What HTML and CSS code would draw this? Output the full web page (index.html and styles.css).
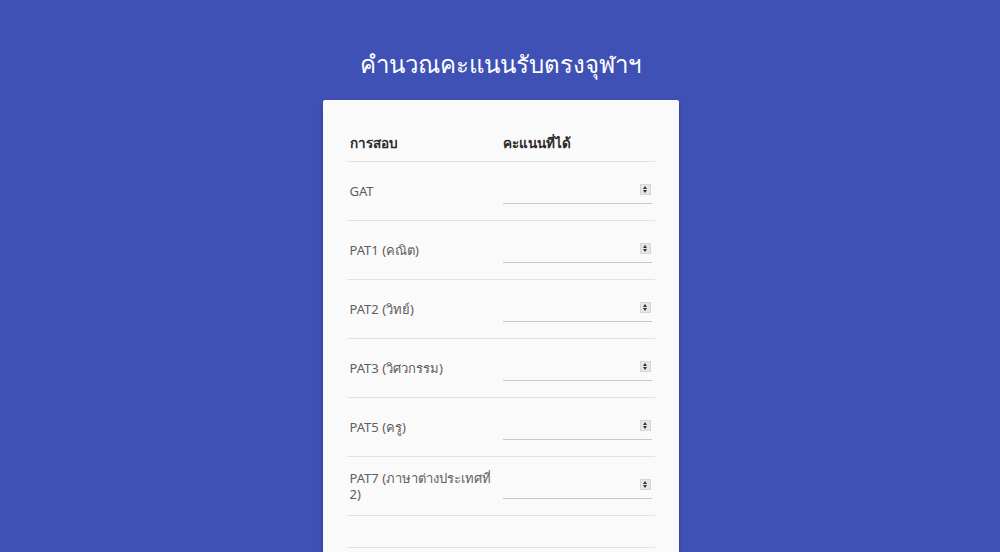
FILE: index.html
```html
<!DOCTYPE html>
<html lang="th">
<head>
<meta charset="utf-8">
<title>คำนวณคะแนนรับตรงจุฬาฯ</title>
<link rel="stylesheet" href="styles.css">
</head>
<body>
<main class="page">
  <h1 class="title">คำนวณคะแนนรับตรงจุฬาฯ</h1>
  <section class="card">
    <div class="row head">
      <div class="cell">การสอบ</div>
      <div class="cell">คะแนนที่ได้</div>
    </div>
    <div class="row">
      <div class="cell name">GAT</div>
      <div class="cell"><div class="field"><span class="spin"></span></div></div>
    </div>
    <div class="row">
      <div class="cell name">PAT1 (คณิต)</div>
      <div class="cell"><div class="field"><span class="spin"></span></div></div>
    </div>
    <div class="row">
      <div class="cell name">PAT2 (วิทย์)</div>
      <div class="cell"><div class="field"><span class="spin"></span></div></div>
    </div>
    <div class="row">
      <div class="cell name">PAT3 (วิศวกรรม)</div>
      <div class="cell"><div class="field"><span class="spin"></span></div></div>
    </div>
    <div class="row">
      <div class="cell name">PAT5 (ครู)</div>
      <div class="cell"><div class="field"><span class="spin"></span></div></div>
    </div>
    <div class="row">
      <div class="cell name">PAT7 (ภาษาต่างประเทศที่ 2)</div>
      <div class="cell"><div class="field"><span class="spin"></span></div></div>
    </div>
    <div class="row empty"></div>
    <div class="row empty"></div>
  </section>
</main>
</body>
</html>
```

FILE: styles.css
```css
html, body {
  margin: 0;
  padding: 0;
  background: #3f51b5;
  font-family: "Noto Sans", "Open Sans", sans-serif;
}
.page {
  display: flex;
  flex-direction: column;
  align-items: center;
  padding-top: 44px;
}
.title {
  margin: 0 0 16px;
  color: #ffffff;
  font-size: 24px;
  font-weight: 400;
  line-height: 40px;
}
.card {
  width: 308px;
  padding: 24px 24px 0;
  margin-left: 1px;
  background: #fafafa;
  border-radius: 2px;
  box-shadow: 0 2px 4px rgba(0, 0, 0, 0.25);
}
.row {
  display: grid;
  grid-template-columns: 154px 154px;
  min-height: 58px;
  border-bottom: 1px solid #e2e2e2;
}
.row.head {
  min-height: 36px;
  padding-top: 1px;
  font-weight: 700;
  color: #333333;
}
.row.empty {
  min-height: 31px;
}
.cell {
  padding: 0 2px 0 3px;
  font-size: 13px;
  line-height: 16px;
  align-self: center;
  color: #5e5e5e;
}
.head .cell {
  color: #2b2b2b;
  font-size: 13.5px;
}
.cell + .cell {
  padding: 0 4px 0 2px;
  align-self: start;
}
.head .cell + .cell {
  align-self: center;
}
.field {
  margin-top: 14px;
  height: 27px;
  width: 149px;
  border-bottom: 1px solid #c9c9c9;
  display: flex;
  align-items: center;
  justify-content: flex-end;
}
.spin {
  width: 9px;
  height: 9px;
  margin-right: 1px;
  background: #e6e6e6;
  border: 1px solid #d6d6d6;
  position: relative;
}
.spin::before, .spin::after {
  content: "";
  position: absolute;
  left: 2px;
  border-left: 2.5px solid transparent;
  border-right: 2.5px solid transparent;
}
.spin::before {
  top: 1px;
  border-bottom: 3px solid #333;
}
.spin::after {
  bottom: 1px;
  border-top: 3px solid #333;
}
```
